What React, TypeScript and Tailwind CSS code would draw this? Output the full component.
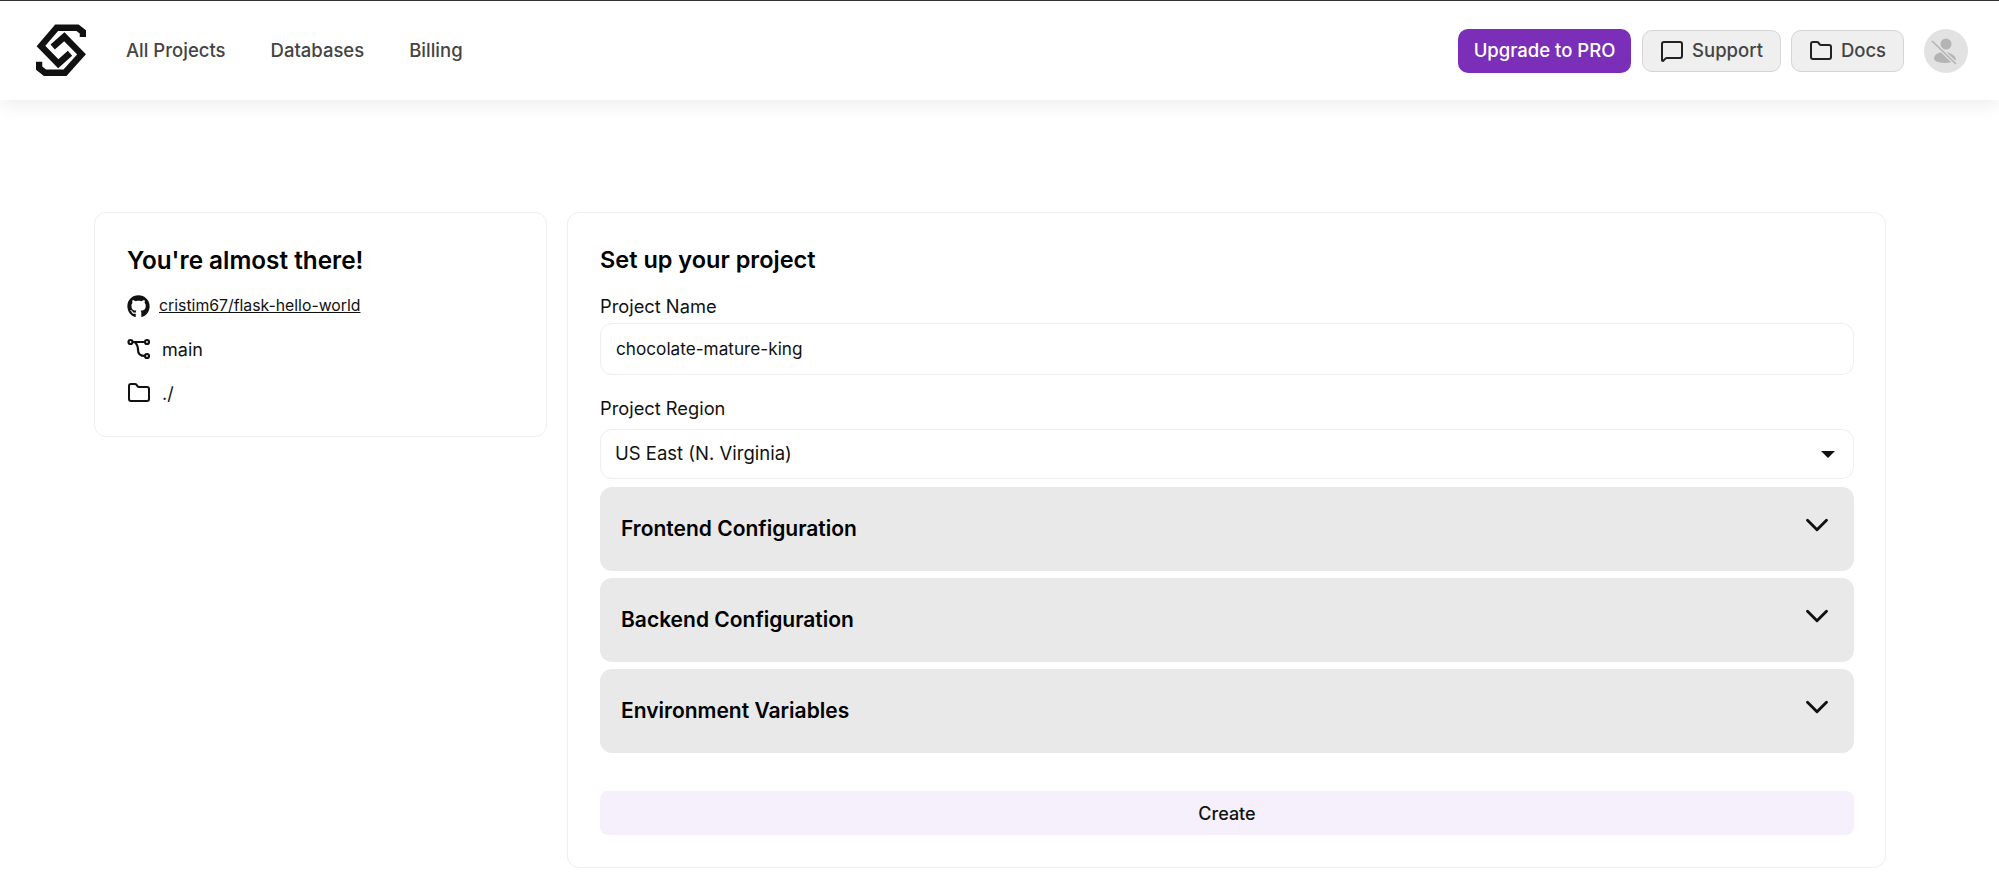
import { ChevronDown, Folder, MessageSquare } from "lucide-react";
import { FaGithub } from "react-icons/fa";

const font = { fontFamily: "Inter, 'Liberation Sans', sans-serif" };

function Logo() {
  return (
    <svg width="50" height="54" viewBox="0 0 50 54" fill="none" stroke="#111" strokeWidth="6.5" strokeLinejoin="miter">
      <path d="M47 13 V8 L41.5 3.7 H20.7 L5 22 L22.3 39.7 L34 29.3" />
      <path d="M3 37.7 V44 L9 48.7 H29 L45.5 30.3 L28.3 12.7 L16.7 23" />
    </svg>
  );
}

function BranchIcon() {
  return (
    <svg width="24" height="24" viewBox="0 0 24 24" fill="none" stroke="#111" strokeWidth="2.2">
      <circle cx="3.5" cy="5" r="2" />
      <circle cx="20" cy="5" r="2" />
      <circle cx="20" cy="19" r="2" />
      <path d="M5.5 5 H18 M8 5.5 C11 8 11 10 11 13 C11 17 13 19 18 19" />
    </svg>
  );
}

function AvatarIcon() {
  return (
    <svg width="30" height="30" viewBox="0 0 30 30" fill="#b4b4b4">
      <circle cx="15" cy="8" r="5.5" />
      <path d="M3 23 C3 18 8 16 13 16 C18 16 25 19 25 24 C20 28 5 28 3 23 Z" />
      <path d="M1 5 L25 28" stroke="#e2e2e2" strokeWidth="4" />
      <path d="M1 5 L25 28" stroke="#b4b4b4" strokeWidth="1.6" />
    </svg>
  );
}

function Section({ title }: { title: string }) {
  return (
    <div className="flex h-[84px] justify-between rounded-xl bg-[#e9e9e9] pl-[21px] pr-[18px]">
      <span className="self-center text-[21px] font-semibold text-black">{title}</span>
      <ChevronDown className="mt-[19px] h-[38px] w-[38px] text-[#111]" strokeWidth={1.8} />
    </div>
  );
}

export default function App() {
  return (
    <div className="h-[874px] overflow-hidden bg-white" style={font}>
      <header className="flex h-[100px] items-center border-t border-[#333] bg-white pl-[36px] pr-[31px] shadow-[0_4px_20px_rgba(0,0,0,0.08)]">
        <Logo />
        <nav className="ml-[40px] flex gap-[45px] text-[18.5px] font-medium text-[#444]">
          <span>All Projects</span>
          <span>Databases</span>
          <span>Billing</span>
        </nav>
        <div className="ml-auto flex items-center">
          <button className="h-[44px] w-[173px] rounded-[10px] bg-[#7b2fb8] text-[18.5px] font-medium text-white">Upgrade to PRO</button>
          <button className="ml-[11px] flex h-[42px] w-[139px] items-center justify-center gap-2 rounded-[10px] border border-[#d4d4d4] bg-[#efefef] text-[18.5px] font-medium text-[#444]">
            <MessageSquare className="h-6 w-6 text-[#222]" strokeWidth={2} />
            Support
          </button>
          <button className="ml-[10px] flex h-[42px] w-[113px] items-center justify-center gap-2 rounded-[10px] border border-[#d4d4d4] bg-[#efefef] text-[18.5px] font-medium text-[#444]">
            <Folder className="h-6 w-6 text-[#222]" strokeWidth={2} />
            Docs
          </button>
          <div className="ml-[20px] flex h-[44px] w-[44px] items-center justify-center rounded-full bg-[#e2e2e2]">
            <AvatarIcon />
          </div>
        </div>
      </header>

      <main className="flex items-start gap-5 pl-[94px] pr-[113px] pt-[112px]">
        <section className="h-[225px] w-[453px] shrink-0 rounded-xl border border-[#eeeeee] pl-[32px] pt-[32px]">
          <h2 className="text-[24.3px] font-semibold leading-[30px] text-black">You're almost there!</h2>
          <div className="mt-[19px] flex h-6 items-center gap-[9px] text-[15.8px] text-[#111]">
            <FaGithub className="h-[23px] w-[23px] text-[#111]" />
            <span className="underline">cristim67/flask-hello-world</span>
          </div>
          <div className="mt-[19px] flex h-6 items-center gap-[11px] text-[18px] text-[#111]">
            <BranchIcon />
            main
          </div>
          <div className="mt-[20px] flex h-6 items-center gap-[11px] text-[18px] text-[#111]">
            <Folder className="h-6 w-6 text-[#111]" strokeWidth={2} />
            ./
          </div>
        </section>

        <section className="h-[656px] min-w-0 flex-1 rounded-xl border border-[#eeeeee] pl-[32px] pr-[31px] pt-[32px]">
          <h2 className="text-[23.5px] font-semibold leading-[30px] text-black">Set up your project</h2>
          <div className="mt-[18px] text-[18.3px] leading-[26px] text-[#111]">Project Name</div>
          <div className="mt-[4px] flex h-[52px] items-center rounded-xl border border-[#eeeeee] pl-[15px] text-[17.2px] text-[#111]">chocolate-mature-king</div>
          <div className="mt-[20px] text-[18.3px] leading-[26px] text-[#111]">Project Region</div>
          <div className="mt-[8px] flex h-[50px] items-center justify-between rounded-xl border border-[#eeeeee] pl-[14px] pr-[18px] text-[18.5px] text-[#111]">
            US East (N. Virginia)
            <span className="h-0 w-0 border-x-[7px] border-t-[7px] border-x-transparent border-t-[#111]" />
          </div>
          <div className="mt-2 flex flex-col gap-[7px]">
            <Section title="Frontend Configuration" />
            <Section title="Backend Configuration" />
            <Section title="Environment Variables" />
          </div>
          <button className="mt-[38px] h-[44px] w-full rounded-lg bg-[#f6f0fc] text-[18px] font-medium text-[#111]">Create</button>
        </section>
      </main>
    </div>
  );
}
